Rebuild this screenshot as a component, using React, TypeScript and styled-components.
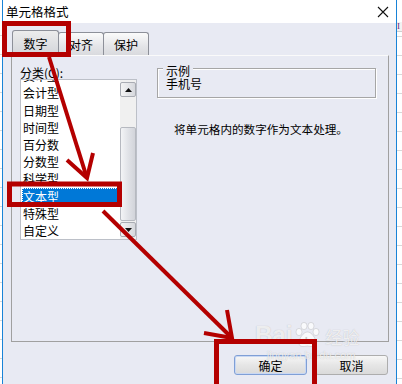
import React from 'react';
import styled, { createGlobalStyle } from 'styled-components';

const Global = createGlobalStyle`
  html, body { margin: 0; padding: 0; background: #fff; }
  body {
    width: 402px;
    height: 384px;
    overflow: hidden;
    font-family: "Noto Sans CJK SC", "Noto Sans", sans-serif;
  }
`;

const BG = '#e8eaf3';
const RED = '#b40000';

const Page = styled.div`
  position: relative;
  display: flex;
  width: 402px;
  height: 384px;
  overflow: hidden;
`;

const SheetEdge = styled.div<{ $w: number }>`
  width: ${(p) => p.$w}px;
  flex: none;
  display: flex;
  flex-direction: column;
  background: #fff;
`;

const SheetHead = styled.div`
  height: 9px;
  margin-top: 22px;
  background: #f2f2f2;
  border-bottom: 1px solid #cfcfcf;
  color: #6a2a7a;
  font: 9px "Liberation Serif", serif;
  line-height: 9px;
  overflow: hidden;
`;

const SheetRows = styled.div<{ $offset?: number }>`
  flex: 1;
  margin-top: ${(p) => p.$offset ?? 0}px;
  background: repeating-linear-gradient(
    to bottom,
    transparent 0 4px,
    #d8d8d8 4px 5px,
    transparent 5px 19px
  );
`;

const Dialog = styled.div`
  width: 393px;
  flex: none;
  border-left: 1px solid #1883d7;
  border-right: 1px solid #1883d7;
  background: ${BG};
  display: flex;
  flex-direction: column;
`;

const TitleBar = styled.div`
  height: 23px;
  background: #fff;
  display: flex;
  align-items: center;
  justify-content: space-between;
  padding: 0 7px 0 3px;
  font-size: 12.5px;
  color: #000;
`;

const TabRow = styled.div`
  display: flex;
  align-items: flex-end;
  height: 25px;
  margin: 7px 0 0 9px;
`;

const Tab = styled.div<{ $active?: boolean; $w: number }>`
  width: ${(p) => p.$w}px;
  height: ${(p) => (p.$active ? 25 : 23)}px;
  box-sizing: border-box;
  margin-left: -1px;
  border: 1px solid #8d9099;
  border-bottom: none;
  border-radius: 3px 3px 0 0;
  background: ${(p) =>
    p.$active
      ? 'linear-gradient(#ececec, #d3d5da)'
      : 'linear-gradient(#fbfbfb, #e4e5e8 60%, #d9dade)'};
  display: flex;
  align-items: center;
  justify-content: center;
  font-size: 12px;
  color: #000;
  &:first-child { margin-left: 0; }
`;

const Panel = styled.div`
  width: 378px;
  height: 287px;
  box-sizing: border-box;
  margin-left: 8px;
  border: 1px solid #a0a0a0;
  border-top-color: #fafafa;
  display: flex;
  gap: 20px;
  padding: 10px 0 0 8px;
`;

const Column = styled.div`
  display: flex;
  flex-direction: column;
`;

const Label = styled.div`
  font-size: 12px;
  line-height: 13px;
  height: 13px;
  color: #000;
`;

const ListBox = styled.div`
  width: 117px;
  height: 161px;
  box-sizing: border-box;
  border: 1px solid #bcc0c8;
  background: #fff;
  display: flex;
  overflow: hidden;
`;

const Items = styled.div`
  width: 99px;
  overflow: hidden;
`;

const ItemsInner = styled.div`
  margin-top: -12.8px;
`;

const Item = styled.div<{ $selected?: boolean }>`
  height: 17.2px;
  line-height: 17.2px;
  margin: 0 2px 0 1px;
  padding-left: 1px;
  font-size: 12px;
  white-space: nowrap;
  color: ${(p) => (p.$selected ? '#fff' : '#000')};
  background: ${(p) => (p.$selected ? '#0078d7' : 'transparent')};
  outline: ${(p) => (p.$selected ? '1px dotted #fff' : 'none')};
  outline-offset: -1px;
`;

const ScrollBar = styled.div`
  width: 16px;
  display: flex;
  flex-direction: column;
  padding: 2px 0 2px;
  background: #f0f0f0;
`;

const ScrollBtn = styled.div`
  height: 15px;
  box-sizing: border-box;
  border: 1px solid #a9acb3;
  border-radius: 2px;
  background: linear-gradient(to right, #f4f4f4, #d6d8dd);
  display: flex;
  align-items: center;
  justify-content: center;
`;

const Track = styled.div`
  flex: 1;
  display: flex;
  flex-direction: column;
  padding: 30px 0 1px;
`;

const Thumb = styled.div`
  flex: 1;
  box-sizing: border-box;
  border: 1px solid #b6b9c0;
  border-radius: 2px;
  background: linear-gradient(to right, #f3f4f6, #dfe1e6 55%, #d2d4da);
`;

const Group = styled.div`
  width: 219px;
  height: 30px;
  box-sizing: border-box;
  margin-top: 2px;
  border: 1px solid #a6a6a6;
  box-shadow: inset 1px 1px 0 #fff, 1px 1px 0 #fff;
  padding-left: 5px;
  display: flex;
  flex-direction: column;
  align-items: flex-start;
`;

const Legend = styled.div`
  margin-top: -4px;
  padding: 0 3px;
  height: 12px;
  line-height: 12px;
  font-size: 12px;
  background: ${BG};
  color: #000;
`;

const GroupValue = styled.div`
  margin-left: 3px;
  font-size: 12px;
  line-height: 14px;
  color: #000;
`;

const Description = styled.div`
  margin-top: 24px;
  padding-left: 17px;
  font-size: 11.6px;
  line-height: 14px;
  color: #000;
  white-space: nowrap;
`;

const Footer = styled.div`
  display: flex;
  justify-content: flex-end;
  gap: 8px;
  margin-top: 13px;
  padding-right: 8px;
`;

const Button = styled.div<{ $default?: boolean }>`
  width: 73px;
  height: 20px;
  box-sizing: border-box;
  border: 1px solid ${(p) => (p.$default ? '#7f9fd6' : '#adadad')};
  border-radius: 3px;
  box-shadow: ${(p) => (p.$default ? 'inset 0 0 0 1px #c9d8f3' : 'none')};
  background: linear-gradient(#f7f7f7, #e6e6e6 50%, #dadada);
  display: flex;
  align-items: center;
  justify-content: center;
  font-size: 12px;
  color: #000;
`;

const Overlay = styled.svg`
  position: absolute;
  left: 0;
  top: 0;
  pointer-events: none;
`;

const Watermark = styled.div`
  position: absolute;
  left: 255px;
  top: 322px;
  display: flex;
  flex-direction: column;
  align-items: flex-end;
  color: rgba(255, 255, 255, 0.75);
  text-shadow: 0 0 1px rgba(120, 120, 120, 0.45);
  pointer-events: none;
`;

const MarkTop = styled.div`
  display: flex;
  align-items: flex-end;
  gap: 2px;
  font: bold 24px "Liberation Sans", Arial, sans-serif;
  line-height: 26px;
`;

const MarkCn = styled.span`
  font: 17px "Noto Sans CJK SC", sans-serif;
  line-height: 22px;
  margin-left: 3px;
`;

const MarkUrl = styled.div`
  font: 11px "Liberation Sans", Arial, sans-serif;
  margin-top: 1px;
  margin-right: 4px;
`;

const Close = () => (
  <svg width="12" height="12" viewBox="0 0 12 12">
    <path d="M1 1 L11 11 M11 1 L1 11" stroke="#111" strokeWidth="1.1" />
  </svg>
);

const Tri = ({ up }: { up?: boolean }) => (
  <svg width="7" height="4" viewBox="0 0 7 4">
    <path d={up ? 'M0 4 L3.5 0 L7 4 Z' : 'M0 0 L7 0 L3.5 4 Z'} fill="#111" />
  </svg>
);

const Paw = () => (
  <svg width="26" height="26" viewBox="0 0 26 26">
    <g fill="rgba(255,255,255,0.75)" stroke="rgba(130,130,130,0.4)" strokeWidth="0.6">
      <ellipse cx="5" cy="10" rx="3" ry="3.6" />
      <ellipse cx="10" cy="4" rx="3" ry="3.6" />
      <ellipse cx="17" cy="4" rx="3" ry="3.6" />
      <ellipse cx="22" cy="10" rx="3" ry="3.6" />
      <path d="M13.5 10 C9 10 5 17 5 21 C5 25 9 25 13.5 24 C18 25 22 25 22 21 C22 17 18 10 13.5 10 Z" />
    </g>
    <text x="13.5" y="22" textAnchor="middle" fontSize="9" fontWeight="bold" fontFamily="Liberation Sans, sans-serif" fill="rgba(160,160,160,0.5)">du</text>
  </svg>
);

const categories = ['货币型', '会计型', '日期型', '时间型', '百分数', '分数型', '科学型', '文本型', '特殊型', '自定义'];

export default function App() {
  return (
    <Page>
      <Global />
      <SheetEdge $w={2}>
        <SheetRows $offset={31} />
      </SheetEdge>
      <Dialog>
        <TitleBar>
          <span>单元格格式</span>
          <Close />
        </TitleBar>
        <TabRow>
          <Tab $active $w={47}>数字</Tab>
          <Tab $w={46}>对齐</Tab>
          <Tab $w={46}>保护</Tab>
        </TabRow>
        <Panel>
          <Column>
            <Label>分类(C):</Label>
            <ListBox>
              <Items>
                <ItemsInner>
                  {categories.map((c) => (
                    <Item key={c} $selected={c === '文本型'}>
                      {c}
                    </Item>
                  ))}
                </ItemsInner>
              </Items>
              <ScrollBar>
                <ScrollBtn>
                  <Tri up />
                </ScrollBtn>
                <Track>
                  <Thumb />
                </Track>
                <ScrollBtn>
                  <Tri />
                </ScrollBtn>
              </ScrollBar>
            </ListBox>
          </Column>
          <Column>
            <Group>
              <Legend>示例</Legend>
              <GroupValue>手机号</GroupValue>
            </Group>
            <Description>将单元格内的数字作为文本处理。</Description>
          </Column>
        </Panel>
        <Footer>
          <Button $default>确定</Button>
          <Button>取消</Button>
        </Footer>
      </Dialog>
      <SheetEdge $w={7}>
        <SheetHead>I</SheetHead>
        <SheetRows />
      </SheetEdge>

      <Watermark>
        <MarkTop>
          <span>Bai</span>
          <Paw />
          <MarkCn>经验</MarkCn>
        </MarkTop>
        <MarkUrl>jingyan.baidu.com</MarkUrl>
      </Watermark>

      <Overlay width="402" height="384" viewBox="0 0 402 384">
        <g fill="none" stroke={RED} strokeWidth="5">
          <rect x="4.5" y="23.5" width="64" height="31" />
          <rect x="9.5" y="184" width="110" height="20.5" />
          <rect x="216.5" y="341.5" width="98" height="50" />
        </g>
        <g fill="none" stroke={RED} strokeWidth="4" strokeLinecap="butt" strokeLinejoin="miter">
          <line x1="49" y1="57" x2="86" y2="175" />
          <polyline points="67,160 87,178 93,153" />
          <line x1="103" y1="211" x2="230" y2="336" />
          <polyline points="204,333 232,338 227,310" />
        </g>
      </Overlay>
    </Page>
  );
}
